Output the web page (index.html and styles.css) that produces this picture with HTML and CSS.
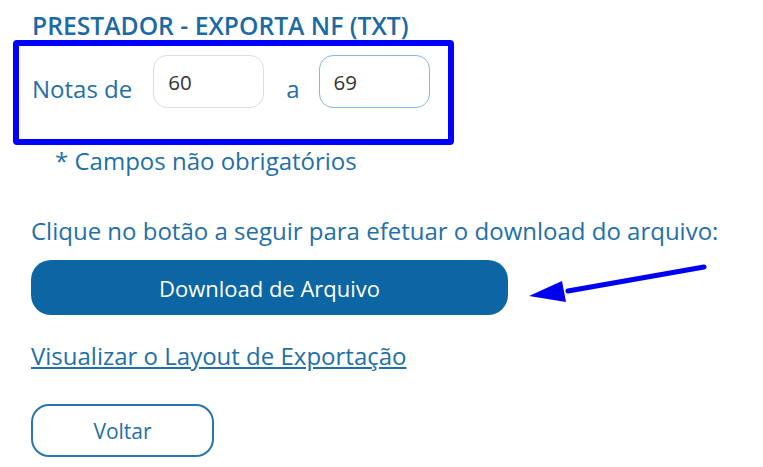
FILE: index.html
```html
<!DOCTYPE html>
<html lang="pt-BR">
<head>
<meta charset="utf-8">
<link rel="stylesheet" href="styles.css">
</head>
<body>
<main class="page">
  <h2 class="title">PRESTADOR - EXPORTA NF (TXT)</h2>
  <div class="range-box">
    <span class="label">Notas de</span>
    <div class="field">60</div>
    <span class="label sep">a</span>
    <div class="field focused">69</div>
  </div>
  <p class="note">* Campos não obrigatórios</p>
  <p class="info">Clique no botão a seguir para efetuar o download do arquivo:</p>
  <div class="download-row">
    <button class="btn-primary">Download de Arquivo</button>
    <svg class="arrow" width="200" height="50" viewBox="0 0 200 50">
      <line x1="176" y1="11" x2="40" y2="35" stroke="#0000f0" stroke-width="5" stroke-linecap="round"/>
      <polygon points="1,40 34,25 38,46" fill="#0000f0"/>
    </svg>
  </div>
  <a class="link" href="#">Visualizar o Layout de Exportação</a>
  <button class="btn-outline">Voltar</button>
</main>
</body>
</html>
```
FILE: styles.css
```css
html, body {
  margin: 0;
  background: #ffffff;
}
.page {
  font-family: "Open Sans", "Noto Sans", sans-serif;
  color: #1f6fa8;
  padding: 13px 0 0 31px;
  display: flex;
  flex-direction: column;
  align-items: flex-start;
}
.title {
  margin: 0 0 1px 1px;
  font-size: 24.7px;
  font-weight: 600;
  line-height: 26px;
  color: #1c6aa3;
}
.range-box {
  margin: 0 0 0 -18px;
  width: 416px;
  height: 84px;
  border: 6px solid #0000ff;
  border-radius: 4px;
  display: flex;
  align-items: flex-start;
  padding: 9px 0 0 13px;
  box-sizing: content-box;
}
.label {
  font-size: 24px;
  line-height: 53px;
  margin: 7px 21px 0 0;
}
.sep { margin: 7px 19px 0 1px; }
.field {
  width: 111px;
  height: 53px;
  box-sizing: border-box;
  border: 1px solid #dddddd;
  border-radius: 14px;
  padding: 0 0 0 14px;
  display: flex;
  align-items: center;
  font-size: 20.5px;
  color: #333;
  margin-right: 21px;
}
.field.focused {
  border-color: #86b7de;
  margin-right: 0;
}
.note {
  margin: 1px 0 0 24px;
  font-size: 24px;
  line-height: 30px;
}
.info {
  margin: 40px 0 0 0;
  font-size: 24px;
  line-height: 30px;
}
.download-row {
  position: relative;
  margin-top: 14px;
}
.btn-primary {
  display: block;
  width: 477px;
  height: 55px;
  border: none;
  border-radius: 20px;
  background: #0c66a4;
  color: #ffffff;
  font-family: "Open Sans", "Noto Sans", sans-serif;
  font-size: 22px;
  cursor: pointer;
}
.arrow {
  position: absolute;
  left: 497px;
  top: -4px;
}
.link {
  margin-top: 26px;
  font-size: 24px;
  line-height: 30px;
  color: #1f6fa8;
  text-decoration: underline;
}
.btn-outline {
  margin-top: 33px;
  width: 183px;
  height: 53px;
  background: #ffffff;
  border: 2px solid #2a75b0;
  border-radius: 18px;
  color: #1f6fa8;
  font-family: "Open Sans", "Noto Sans", sans-serif;
  font-size: 21px;
  cursor: pointer;
}
```
